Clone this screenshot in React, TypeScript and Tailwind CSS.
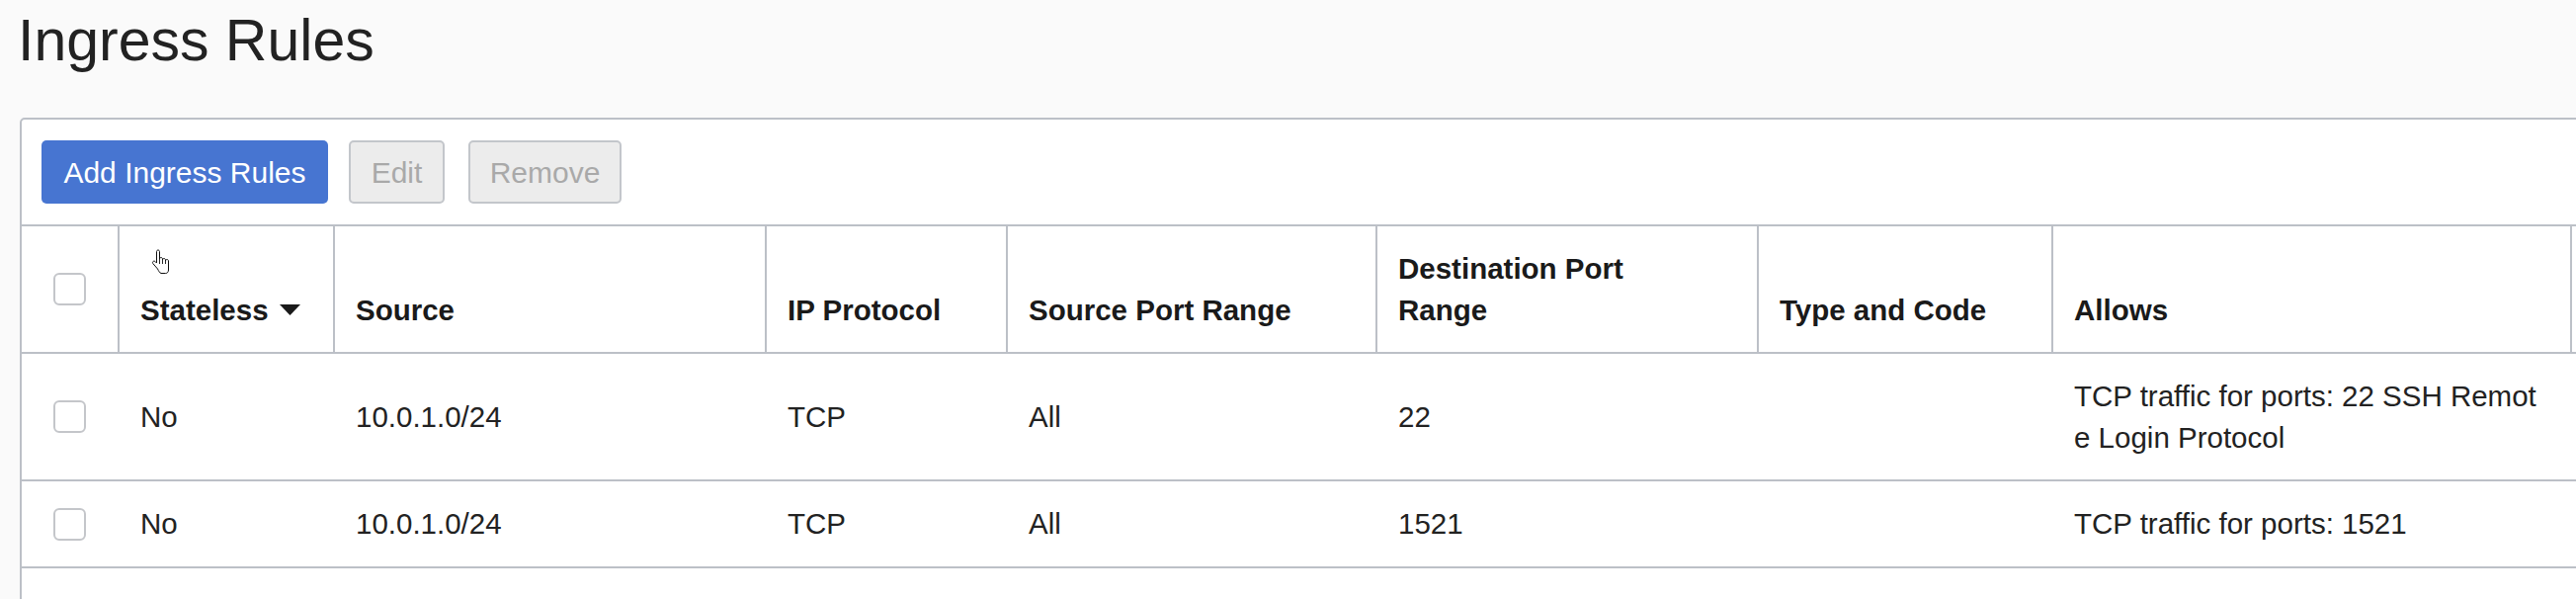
import React from "react";

const cols =
  "grid grid-cols-[97px_218px_437px_244px_374px_386px_298px_525px_200px]";

const rules = [
  {
    stateless: "No",
    source: "10.0.1.0/24",
    protocol: "TCP",
    srcPorts: "All",
    dstPorts: "22",
    typeCode: "",
    allows: ["TCP traffic for ports: 22 SSH Remot", "e Login Protocol"],
  },
  {
    stateless: "No",
    source: "10.0.1.0/24",
    protocol: "TCP",
    srcPorts: "All",
    dstPorts: "1521",
    typeCode: "",
    allows: ["TCP traffic for ports: 1521"],
  },
];

function Checkbox() {
  return <div className="w-[33px] h-[33px] border-2 border-[#c4c6ca] rounded-[6px] bg-white" />;
}

function HandCursor() {
  return (
    <svg width="19" height="26" viewBox="0 0 18 26" className="absolute left-[32px] top-[23px]">
      <path
        d="M6.5 1C5.7 1 5 1.7 5 2.5V14L3.6 12.6C3 12 2 12 1.4 12.6C0.8 13.2 0.8 14.1 1.4 14.7L6 20C7 22 8 24 9.5 24.5H14C16 24.5 17 23 17 21V12C17 11.2 16.3 10.5 15.5 10.5C14.7 10.5 14 11.2 14 12V11C14 10.2 13.3 9.5 12.5 9.5C11.7 9.5 11 10.2 11 11V10C11 9.2 10.3 8.5 9.5 8.5C8.8 8.5 8 9.2 8 10V2.5C8 1.7 7.3 1 6.5 1Z"
        fill="#fff"
        stroke="#111"
        strokeWidth="1"
        strokeLinejoin="round"
      />
      <path d="M8 10V15M11 11V15M14 12V15" stroke="#111" strokeWidth="0.9" />
    </svg>
  );
}

export default function App() {
  const th = "flex items-end border-l-2 border-[#bcc0c7] pl-[21px] pr-[22px] py-[22px] font-bold";
  const td = "flex items-center pl-[23px] pr-[22px] py-[22px]";

  return (
    <div className="w-[2607px] h-[606px] overflow-hidden bg-[#fafafa] text-[#222] font-['Liberation_Sans',Arial,sans-serif]">
      <h1 className="pl-[18px] pt-[8px] text-[59px] leading-[67px] font-normal text-[#222]">Ingress Rules</h1>

      <div className="ml-[20px] mt-[44px] w-[2700px] border-2 border-[#bcc0c7] rounded-[5px] bg-white">
        {/* Toolbar */}
        <div className="flex items-center pl-[20px] pt-[21px] pb-[21px] text-[30px]">
          <button className="w-[290px] h-[64px] rounded-[5px] bg-[#4775d1] text-white flex items-center justify-center">
            Add Ingress Rules
          </button>
          <button className="ml-[21px] w-[97px] h-[64px] rounded-[5px] border-2 border-[#c3c6cb] bg-[#ececec] text-[#a9a9a9] flex items-center justify-center">
            Edit
          </button>
          <button className="ml-[24px] w-[155px] h-[64px] rounded-[5px] border-2 border-[#c3c6cb] bg-[#ececec] text-[#a9a9a9] flex items-center justify-center">
            Remove
          </button>
        </div>

        {/* Table */}
        <div className="text-[29.5px] leading-[41.6px]">
          <div className={`${cols} border-t-2 border-b-2 border-[#bcc0c7] text-[#1a1a1a]`}>
            <div className="flex items-center justify-center">
              <Checkbox />
            </div>
            <div className={`${th} relative whitespace-nowrap`}>
              <HandCursor />
              <span>
                Stateless
                <svg width="21" height="11" viewBox="0 0 21 11" className="inline-block ml-[11px] align-[5px]">
                  <polygon points="0,0 21,0 10.5,11" fill="#1a1a1a" />
                </svg>
              </span>
            </div>
            <div className={th}>Source</div>
            <div className={th}>IP Protocol</div>
            <div className={th}>Source Port Range</div>
            <div className={th}>
              <span>
                Destination Port
                <br />
                Range
              </span>
            </div>
            <div className={th}>Type and Code</div>
            <div className={th}>Allows</div>
            <div className={th} />
          </div>

          {rules.map((r, i) => (
            <div key={i} className={`${cols} border-b-2 border-[#bcc0c7]`}>
              <div className="flex items-center justify-center">
                <Checkbox />
              </div>
              <div className={td}>{r.stateless}</div>
              <div className={td}>{r.source}</div>
              <div className={td}>{r.protocol}</div>
              <div className={td}>{r.srcPorts}</div>
              <div className={td}>{r.dstPorts}</div>
              <div className={td}>{r.typeCode}</div>
              <div className={`${td} whitespace-nowrap`}>
                <span>
                  {r.allows.map((line, j) => (
                    <span key={j} className="block">
                      {line}
                    </span>
                  ))}
                </span>
              </div>
              <div className={td} />
            </div>
          ))}
        </div>

        <div className="h-[120px]" />
      </div>
    </div>
  );
}
